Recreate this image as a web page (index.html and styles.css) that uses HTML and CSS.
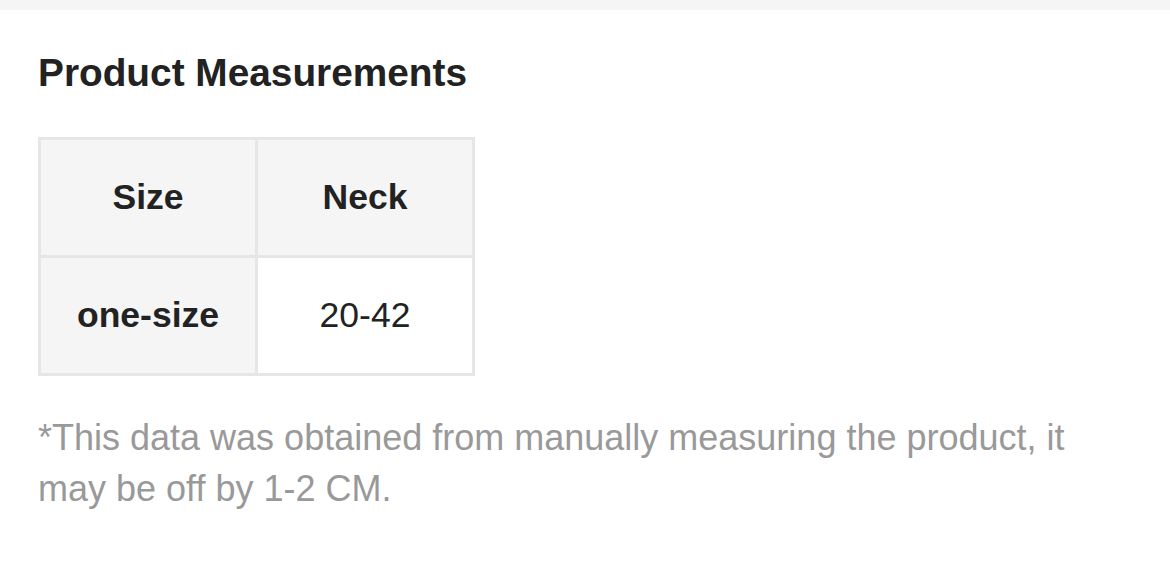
FILE: index.html
```html
<!DOCTYPE html>
<html lang="en">
<head>
<meta charset="utf-8">
<title>Product Measurements</title>
<link rel="stylesheet" href="styles.css">
</head>
<body>
<div class="topbar"></div>
<section class="measurements">
  <h2 class="title">Product Measurements</h2>
  <table class="size-table">
    <tr>
      <th class="cell head">Size</th>
      <th class="cell head">Neck</th>
    </tr>
    <tr>
      <th class="cell head">one-size</th>
      <td class="cell value">20-42</td>
    </tr>
  </table>
  <p class="note">*This data was obtained from manually measuring the product, it may be off by 1-2 CM.</p>
</section>
</body>
</html>
```

FILE: styles.css
```css
html, body {
  margin: 0;
  padding: 0;
  background: #ffffff;
}

body {
  font-family: "Liberation Sans", Arial, sans-serif;
  color: #222222;
}

.topbar {
  height: 10px;
  background: #f5f5f5;
}

.measurements {
  padding: 40px 38px 0 38px;
}

.title {
  margin: 0;
  font-size: 38.8px;
  line-height: 45px;
  font-weight: bold;
  color: #222222;
}

.size-table {
  margin-top: 42px;
  border-collapse: collapse;
}

.cell {
  width: 214px;
  height: 115px;
  padding: 0;
  border: 3px solid #e6e6e6;
  text-align: center;
  vertical-align: middle;
  font-size: 35.5px;
  color: #222222;
}

.head {
  background: #f5f5f5;
  font-weight: bold;
}

.value {
  background: #ffffff;
  font-weight: normal;
}

.note {
  margin: 36px 0 0 0;
  font-size: 36px;
  line-height: 51px;
  color: #999999;
}
```
